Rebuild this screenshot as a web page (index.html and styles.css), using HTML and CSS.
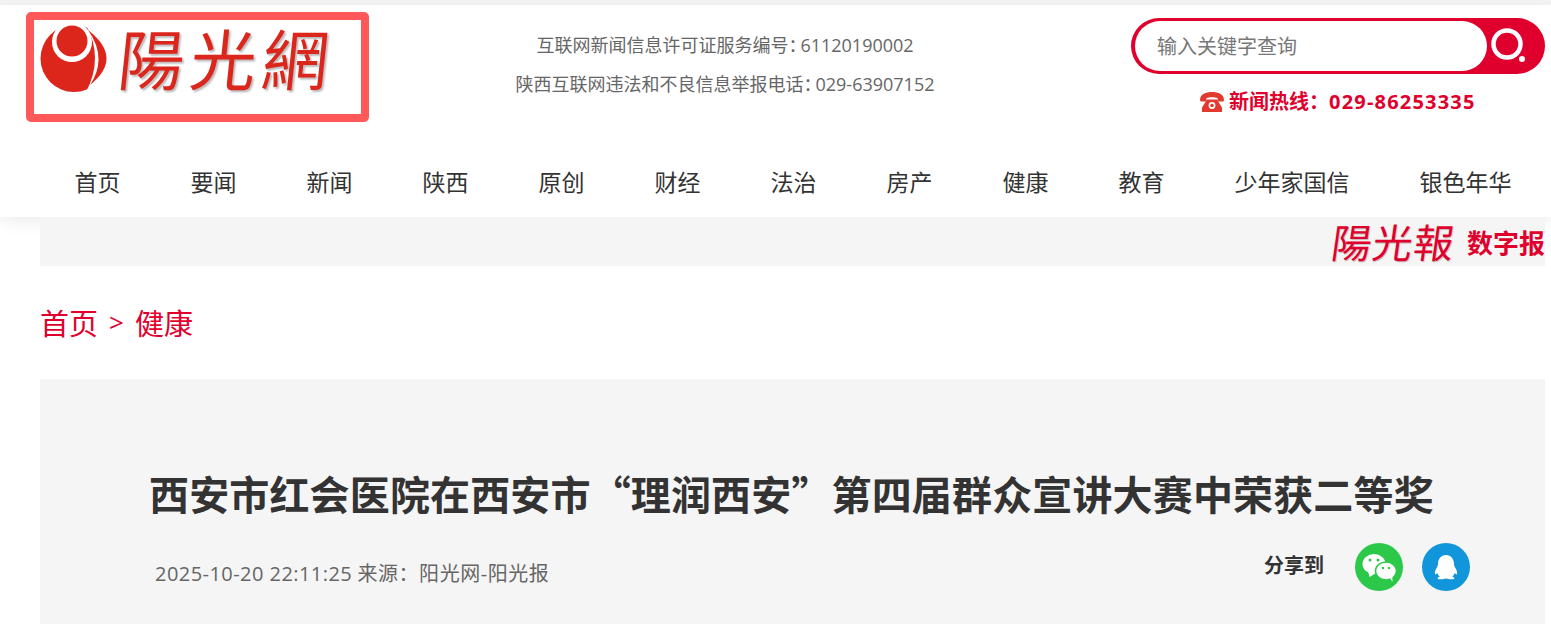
FILE: index.html
```html
<!DOCTYPE html>
<html lang="zh-CN">
<head>
  <meta charset="UTF-8">
  <meta name="viewport" content="width=device-width, initial-scale=1.0">
  <title>西安市红会医院在西安市“理润西安”第四届群众宣讲大赛中荣获二等奖</title>
  <link rel="stylesheet" href="styles.css">
</head>
<body>
  <header class="header">
    <div class="header-top">
      <a class="logo" href="#">
        <svg class="logo-mark" viewBox="0 0 68 67" width="68" height="67">
          <circle cx="34" cy="33.5" r="33.5" fill="#dc261c"/>
          <path d="M46 0H68V67H46Q64 33 46 0Z" fill="#fff"/>
          <path d="M48 5Q84 33 50 60Q68 33 48 5Z" fill="#dc261c"/>
          <circle cx="32" cy="17" r="20" fill="#fff"/>
          <circle cx="32" cy="16" r="15.5" fill="#dc261c"/>
        </svg>
        <span class="logo-text">陽光網</span>
      </a>
      <div class="info">
        <p>互联网新闻信息许可证服务编号<span class="colon">&#65306;</span>61120190002</p>
        <p>陕西互联网违法和不良信息举报电话<span class="colon">&#65306;</span>029-63907152</p>
      </div>
      <div class="search-col">
        <form class="search">
          <input class="search-input" type="text" placeholder="输入关键字查询">
          <button class="search-btn" type="button" aria-label="搜索">
            <svg viewBox="0 0 40 40" width="40" height="40">
              <circle cx="18" cy="18" r="13.5" fill="none" stroke="#fff" stroke-width="4.5"/>
              <circle cx="33" cy="33" r="3" fill="#fff"/>
            </svg>
          </button>
        </form>
        <div class="hotline">
          <svg viewBox="0 0 24 20" width="24" height="20">
            <path d="M0 8C0 2 6 0 12 0s12 2 12 8c0 1-1 1.500-2 1.500h-3c-1 0-1.500-.5-1.500-1.500V6c-3-1-8-1-11 0v2c0 1-.5 1.500-1.500 1.500H2C1 9.500 0 9 0 8Z" fill="#e33a30"/>
            <path d="M7 7.500h10l5 8V20H2v-4.500Z" fill="#e33a30"/>
            <circle cx="12" cy="13.500" r="3.400" fill="#fff"/>
            <circle cx="12" cy="13.500" r="1.800" fill="#e33a30"/>
          </svg>
          <span>新闻热线&#65306;<span class="hotline-num">029-86253335</span></span>
        </div>
      </div>
    </div>
    <nav class="nav">
      <a href="#">首页</a>
      <a href="#">要闻</a>
      <a href="#">新闻</a>
      <a href="#">陕西</a>
      <a href="#">原创</a>
      <a href="#">财经</a>
      <a href="#">法治</a>
      <a href="#">房产</a>
      <a href="#">健康</a>
      <a href="#">教育</a>
      <a href="#">少年家国信</a>
      <a href="#">银色年华</a>
    </nav>
  </header>

  <main class="main">
    <div class="paper-bar">
      <a class="paper-link" href="#">
        <span class="paper-name">陽光報</span>
        <span class="paper-tag">数字报</span>
      </a>
    </div>

    <div class="crumbs">
      <a href="#">首页</a>
      <span class="crumbs-sep">&gt;</span>
      <a href="#">健康</a>
    </div>

    <article class="article">
      <h1 class="article-title">西安市红会医院在西安市“理润西安”第四届群众宣讲大赛中荣获二等奖</h1>
      <div class="article-meta">
        <span class="meta-text"><span class="meta-date">2025-10-20 22:11:25</span> <span class="meta-source">来源&#65306;阳光网-阳光报</span></span>
        <div class="share">
          <span class="share-label">分享到</span>
          <a class="share-btn share-wechat" href="#" aria-label="微信">
            <svg viewBox="0 0 48 48" width="48" height="48">
              <ellipse cx="19" cy="21" rx="11.500" ry="10" fill="#fff"/>
              <path d="M13 28l1.500 6 5-3Z" fill="#fff"/>
              <ellipse cx="31" cy="28" rx="10.500" ry="9" fill="#fff" stroke="#2cc84a" stroke-width="1.500"/>
              <path d="M35 35l2.500 4-.2-5.500Z" fill="#fff"/>
              <circle cx="15" cy="17" r="1.500" fill="#2cc84a"/>
              <circle cx="23" cy="17" r="1.500" fill="#2cc84a"/>
              <circle cx="28" cy="25" r="1.200" fill="#2cc84a"/>
              <circle cx="34" cy="25" r="1.200" fill="#2cc84a"/>
            </svg>
          </a>
          <a class="share-btn share-qq" href="#" aria-label="QQ">
            <svg viewBox="0 0 48 48" width="48" height="48">
              <path d="M24 12c-5 0-8 4-8 9 0 1-.2 2-.8 3-1.800 2.600-2.700 5-2.200 7 .3 1 1.200.3 2.300-1 .5 1.500 1.200 2.500 2.500 3.500-1.500.5-2.500 1.200-2 2C16.500 36.800 20 36.500 24 35.500c4 1 7.500 1.300 8.200 0 .5-.8-.5-1.500-2-2 1.300-1 2-2 2.500-3.500 1.100 1.300 2 2 2.300 1 .5-2-.4-4.400-2.200-7-.6-1-.8-2-.8-3 0-5-3-9-8-9Z" fill="#fff"/>
            </svg>
          </a>
        </div>
      </div>
    </article>
  </main>
</body>
</html>
```

FILE: styles.css
```css
* {
  box-sizing: border-box;
}
html,
body {
  height: 100%;
}
body {
  margin: 0;
  padding-top: 5px;
  overflow: hidden;
  background-color: #fff;
  font-family: "Open Sans", "Noto Sans CJK SC", sans-serif;
  color: #333;
}
a {
  color: inherit;
  text-decoration: none;
}
p {
  margin: 0;
}

body::before {
  content: "";
  display: block;
  height: 5px;
  margin-top: -5px;
  background-color: #f5f5f5;
}

.header {
  position: relative;
  height: 212px;
  padding-left: 26px;
  background-color: #fff;
  box-shadow: 0 4px 16px rgba(0, 0, 0, 0.08);
}
.header-top {
  display: flex;
  height: 144px;
  padding-top: 7px;
  padding-right: 6px;
}

.logo {
  display: flex;
  align-items: flex-start;
  width: 343px;
  height: 110px;
  padding: 5px 0 0 6px;
  border: 8px solid #ff5858;
  border-radius: 5px;
}
.logo-mark {
  flex-shrink: 0;
}
.logo-text {
  margin: -14px 0 0 11px;
  font-family: "Noto Sans CJK TC", sans-serif;
  font-size: 66px;
  line-height: 90px;
  letter-spacing: 6px;
  white-space: nowrap;
  color: #dc261c;
  text-shadow: 2px 2px 2px #bbb;
  transform: skewX(-6deg);
}

.info {
  width: 420px;
  margin-left: 146px;
  padding-top: 14px;
  font-size: 18px;
  line-height: 39px;
  color: #666;
  text-align: center;
  white-space: nowrap;
}
.colon {
  letter-spacing: -6px;
}

.search-col {
  width: 414px;
  margin-left: auto;
  padding-top: 6px;
}
.search {
  display: flex;
  height: 56px;
  border: 3px solid #e0002d;
  border-left-width: 4px;
  border-radius: 28px;
  background-color: #e0002d;
}
.search-input {
  width: 352px;
  height: 50px;
  padding: 0 22px;
  border: 0;
  border-radius: 25px;
  outline: 0;
  background-color: #fff;
  font-family: inherit;
  font-size: 20px;
}
.search-input::placeholder {
  color: #777;
  opacity: 1;
}
.search-btn {
  flex: 1;
  padding: 0 0 0 2px;
  border: 0;
  background: none;
  text-align: left;
}
.search-btn svg {
  display: block;
}
.hotline {
  display: flex;
  align-items: center;
  gap: 5px;
  margin-top: 13px;
  padding-left: 69px;
  font-size: 20px;
  line-height: 30px;
  font-weight: 700;
  color: #e0002d;
  white-space: nowrap;
}
.hotline-num {
  letter-spacing: 1.2px;
}

.nav {
  display: flex;
  height: 68px;
  margin-left: 13.5px;
  font-size: 23px;
  line-height: 67px;
  color: #333;
}
.nav a {
  padding: 0 35px;
  white-space: nowrap;
}

.main {
  margin: 0 6px 0 40px;
}
.paper-bar {
  position: relative;
  display: flex;
  justify-content: flex-end;
  height: 49px;
  background-color: #f5f5f5;
}
.paper-link {
  display: flex;
  align-items: center;
  gap: 12px;
}
.paper-name {
  font-family: "Noto Sans CJK TC", sans-serif;
  font-size: 40px;
  line-height: 49px;
  color: #e0002d;
  letter-spacing: 1px;
  transform: skewX(-8deg);
  text-shadow: 1px 1px 1px #bbb;
}
.paper-tag {
  font-size: 26px;
  font-weight: 700;
  color: #e0002d;
}

.crumbs {
  display: flex;
  align-items: center;
  gap: 11px;
  height: 113px;
  padding-bottom: 2px;
  font-size: 29px;
  color: #e0002d;
}
.crumbs-sep {
  font-size: 26px;
}

.article {
  height: 300px;
  padding: 84px 111px 0 109px;
  background-color: #f5f5f5;
}
.article-title {
  margin: 0;
  font-family: "Noto Sans CJK SC", sans-serif;
  font-size: 40px;
  line-height: 60px;
  letter-spacing: 0.15px;
  font-weight: 700;
  white-space: nowrap;
  color: #333;
}
.article-meta {
  display: flex;
  align-items: center;
  justify-content: space-between;
  margin-top: 20px;
}
.meta-text {
  margin-left: 6px;
  padding-top: 10px;
  font-size: 20px;
  color: #666;
}
.meta-date {
  letter-spacing: 0.45px;
}
.meta-source {
  letter-spacing: 0.55px;
}
.share {
  display: flex;
  align-items: center;
  gap: 19px;
  margin-right: -36px;
}
.share-label {
  margin-right: 12px;
  padding-bottom: 6px;
  font-size: 20px;
  font-weight: 700;
  color: #333;
}
.share-btn {
  display: block;
  width: 48px;
  height: 48px;
  border-radius: 50%;
}
.share-btn svg {
  display: block;
}
.share-wechat {
  background-color: #2cc84a;
}
.share-qq {
  background-color: #1296db;
}
```
